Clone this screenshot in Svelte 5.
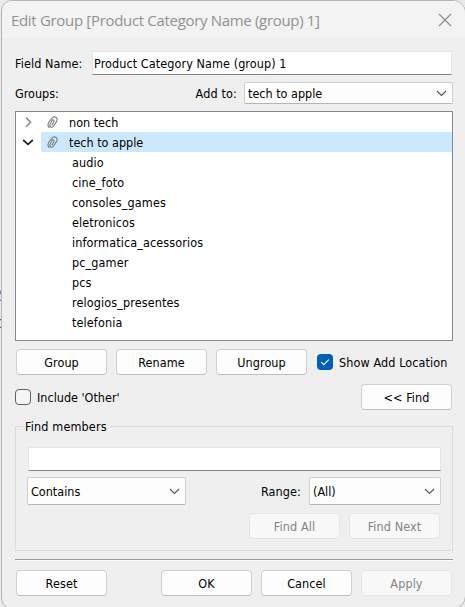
<script>
  const groups = [
    { name: 'non tech', open: false, members: [] },
    {
      name: 'tech to apple',
      open: true,
      members: ['audio', 'cine_foto', 'consoles_games', 'eletronicos', 'informatica_acessorios', 'pc_gamer', 'pcs', 'relogios_presentes', 'telefonia']
    }
  ];
</script>

{#snippet chevron()}
  <svg class="chev" width="11" height="7" viewBox="0 0 11 7"><path d="M1 1l4.5 4.5L10 1" fill="none" stroke="#555" stroke-width="1.1" /></svg>
{/snippet}

{#snippet clip()}
  <svg class="clip" width="12" height="13" viewBox="0 0 12 13">
    <path d="M5 8.9L6.9 5.4C7.6 4 5.6 3.3 4.9 4.6L3 8.6C2 11.4 5.4 12.3 6.7 9.8L9.6 5.4C11.6 1.4 7.2-.7 4.6 2.5L2 6C.6 8.3.6 10 2 11.4" fill="none" stroke="#777" stroke-width="1.05" stroke-linecap="round" />
  </svg>
{/snippet}

<div class="desktop">
  <div class="behind"><span>2</span><span>t</span></div>
  <div class="dialog">
    <header>
      <h1>Edit Group [Product Category Name (group) 1]</h1>
      <svg width="14" height="14" viewBox="0 0 14 14"><path d="M1 1l12 12M13 1L1 13" stroke="#8b8b8b" stroke-width="1.1" /></svg>
    </header>

    <div class="field">
      <span class="label">Field Name:</span>
      <div class="input"><span>Product Category Name (group) 1</span></div>
    </div>

    <div class="addto">
      <span>Groups:</span>
      <span class="to">Add to:</span>
      <div class="select"><span>tech to apple</span>{@render chevron()}</div>
    </div>

    <div class="tree">
      {#each groups as g}
        <div class="row">
          <svg class="arrow" width="25" height="20" viewBox="0 0 25 20">
            {#if g.open}
              <path d="M7.2 8l4.8 4.4L16.8 8" fill="none" stroke="#222" stroke-width="1.7" />
            {:else}
              <path d="M10 5.6l4.6 4.6-4.6 4.6" fill="none" stroke="#888" stroke-width="1.5" />
            {/if}
          </svg>
          <div class="item" class:selected={g.open}>{@render clip()}<span>{g.name}</span></div>
        </div>
        {#each g.members as m}
          <div class="row member"><span>{m}</span></div>
        {/each}
      {/each}
    </div>

    <div class="actions">
      <div class="btn"><span>Group</span></div>
      <div class="btn"><span>Rename</span></div>
      <div class="btn"><span>Ungroup</span></div>
      <div class="check on">
        <svg width="16" height="16" viewBox="0 0 16 16"><path d="M4.3 8.2l2.5 2.5 5-5" fill="none" stroke="#fff" stroke-width="1.1" /></svg>
      </div>
      <span class="checklabel">Show Add Location</span>
    </div>

    <div class="include">
      <div class="check"></div>
      <span class="checklabel">Include 'Other'</span>
      <div class="btn find"><span>&lt;&lt; Find</span></div>
    </div>

    <section>
      <div class="legend"><span>Find members</span></div>
      <div class="input search"></div>
      <div class="filters">
        <div class="select contains"><span>Contains</span>{@render chevron()}</div>
        <span class="rangelabel">Range:</span>
        <div class="select range"><span>(All)</span>{@render chevron()}</div>
      </div>
      <div class="findbtns">
        <div class="btn off"><span>Find All</span></div>
        <div class="btn off"><span>Find Next</span></div>
      </div>
    </section>

    <footer>
      <div class="btn reset"><span>Reset</span></div>
      <div class="btn"><span>OK</span></div>
      <div class="btn"><span>Cancel</span></div>
      <div class="btn off"><span>Apply</span></div>
    </footer>
  </div>
</div>

<style>
  :global(body) { margin: 0; background: #e9e9e9; }
  .desktop { position: relative; width: 465px; height: 607px; overflow: hidden; font: 12.5px/20px 'DejaVu Sans Condensed', 'DejaVu Sans', sans-serif; font-stretch: condensed; color: #000; white-space: nowrap; }
  .desktop * { box-sizing: border-box; }
  .behind { position: absolute; left: -6px; top: 283px; width: 8px; display: flex; flex-direction: column; align-items: flex-end; line-height: 27px; font-size: 15px; color: #555; opacity: 0.9; }
  .dialog { position: relative; margin-left: 1px; width: 465px; height: 609px; border: 1px solid #b5b5b5; border-radius: 11px 13px 13px 11px; background: #efefef; display: flex; flex-direction: column; padding: 0 13px; overflow: hidden; }
  header { height: 37px; margin: 0 -13px; padding: 0 13px 0 9px; background: #f3f3f3; display: flex; align-items: center; justify-content: space-between; flex: none; }
  h1 { margin: 0; font: 400 15px/20px 'Open Sans', 'Noto Sans', sans-serif; letter-spacing: -0.32px; color: #929292; }
  .field { display: flex; margin-top: 13px; height: 24px; align-items: center; width: 438px; }
  .label { width: 77px; padding-top: 1px; letter-spacing: 0.1px; }
  .input { width: 360px; height: 24px; background: #fff; border: 1px solid #e6e6e6; border-bottom-color: #858585; padding: 2px 0 2px 1px; line-height: 20px; letter-spacing: 0.08px; }
  .addto { display: flex; height: 22px; margin-top: 7px; align-items: center; width: 438px; }
  .addto span { padding-top: 1px; }
  .to { margin-left: auto; margin-right: 7px; letter-spacing: 0.15px; }
  .select { width: 209px; height: 22px; background: #fdfdfd; border: 1px solid #d0d0d0; border-bottom-color: #b5b5b5; border-radius: 2px; display: flex; align-items: center; justify-content: space-between; padding: 0 5px 0 3px; }
  .select span { padding-top: 2px; }
  .tree { margin-top: 7px; width: 438px; height: 230px; background: #fff; border: 1px solid #828790; flex: none; }
  .row { display: flex; height: 20px; line-height: 22px; letter-spacing: 0.12px; }
  .arrow { flex: none; }
  .item { flex: 1; display: flex; align-items: center; padding-left: 6px; border-radius: 2px 0 0 2px; letter-spacing: 0; }
  .item span { margin-left: 10px; padding-top: 1px; }
  .selected { background: #cce8ff; }
  .member { padding-left: 56px; }
  .actions { display: flex; align-items: center; height: 26px; margin: 8px 0 0 1px; flex: none; }
  .btn { width: 91px; height: 26px; border: 1px solid #d0d0d0; border-bottom-color: #bfbfbf; border-radius: 4px; background: #fdfdfd; display: flex; align-items: center; justify-content: center; margin-right: 9px; flex: none; }
  .btn span { padding-top: 2px; letter-spacing: 0.1px; }
  .off { background: #f8f8f8; border-color: #e6e6e6; color: #848484; }
  .check { width: 16px; height: 16px; border: 1px solid #626262; border-radius: 4px; background: #f5f5f5; flex: none; }
  .on { background: #005fb8; border: 0; margin-left: 1px; display: flex; }
  .checklabel { margin-left: 6px; padding-top: 2px; letter-spacing: 0.1px; }
  .include { display: flex; align-items: center; height: 26px; margin-top: 9px; width: 438px; flex: none; }
  .include .checklabel { letter-spacing: 0; }
  .find { margin: 0 1px 0 auto; }
  section { width: 438px; height: 125px; margin-top: 16px; border: 1px solid #dcdcdc; flex: none; padding-left: 11px; }
  .legend { height: 20px; width: 87px; margin: -10px 0 0 -4px; padding-left: 2px; background: #efefef; letter-spacing: 0.15px; }
  .search { width: 413px; margin: 10px 0 0 1px; }
  .filters { display: flex; align-items: center; margin-top: 6px; height: 28px; width: 414px; }
  .filters .select { height: 28px; }
  .contains { width: 159px; }
  .rangelabel { margin: 0 8px 0 auto; padding-top: 1px; letter-spacing: 0.1px; }
  .range { width: 132px; }
  .findbtns { display: flex; margin: 8px 0 0 222px; }
  footer { display: flex; width: 438px; margin-top: 8px; border-top: 1px solid #999; box-shadow: inset 0 1px #fdfdfd; padding: 10px 0 0 1px; flex: none; }
  .reset { margin-right: 54px; }
</style>
